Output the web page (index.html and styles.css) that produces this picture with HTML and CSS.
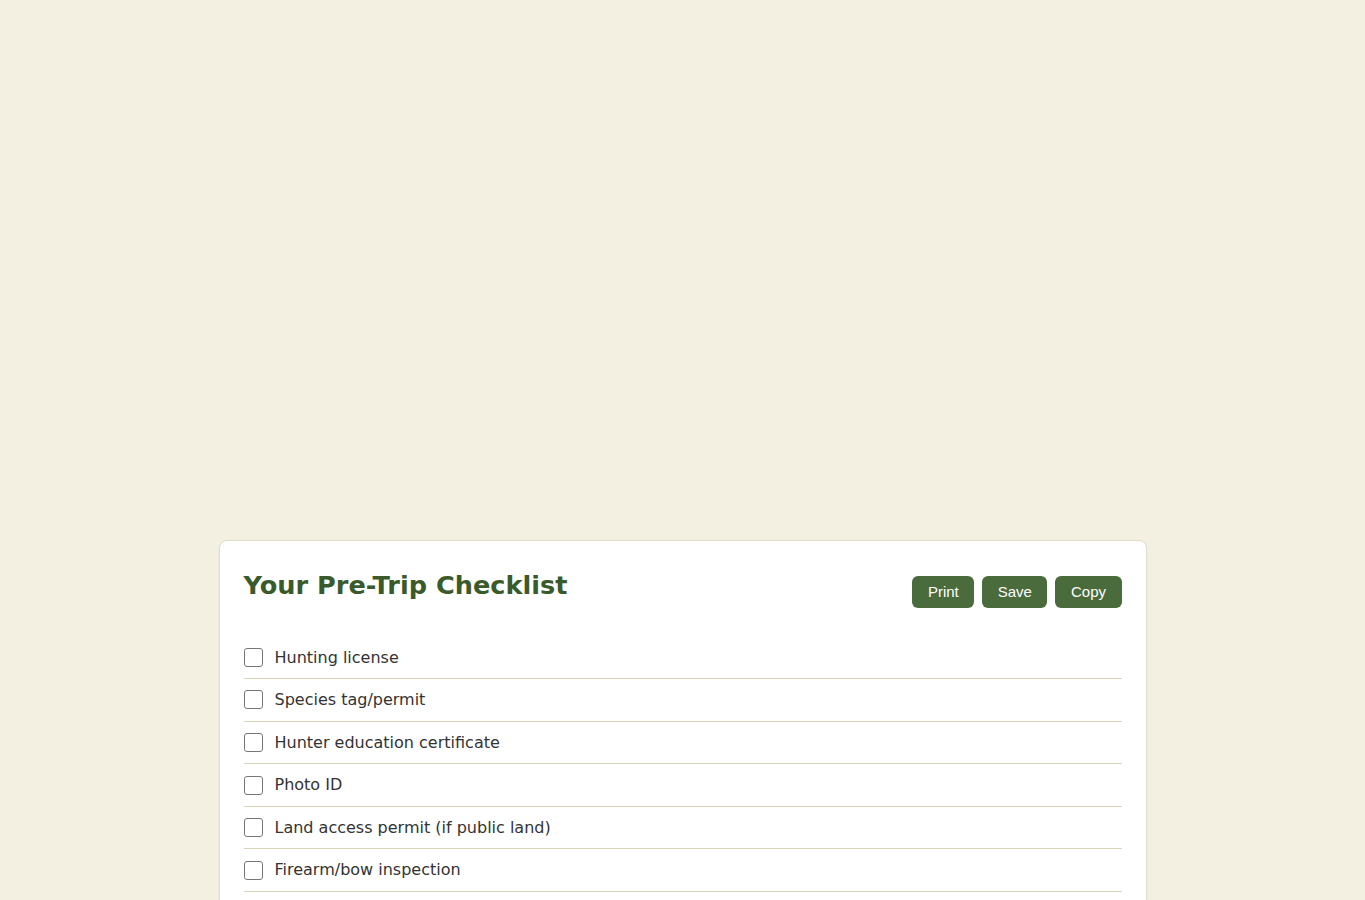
FILE: index.html
```html
<!DOCTYPE html>
<html>

<head>
  <title>Pre-Trip Checklist</title>
  <link rel="stylesheet" href="styles.css">
</head>

<body>
  <div class="checklist-card">
    <div class="card-head">
      <h2 class="card-title">Your Pre-Trip Checklist</h2>
      <div class="card-actions">
        <button type="button" class="btn">Print</button>
        <button type="button" class="btn">Save</button>
        <button type="button" class="btn">Copy</button>
      </div>
    </div>
    <ul class="check-list">
      <li class="check-row"><input type="checkbox" id="c1" /><label for="c1">Hunting license</label></li>
      <li class="check-row"><input type="checkbox" id="c2" /><label for="c2">Species tag/permit</label></li>
      <li class="check-row"><input type="checkbox" id="c3" /><label for="c3">Hunter education certificate</label></li>
      <li class="check-row"><input type="checkbox" id="c4" /><label for="c4">Photo ID</label></li>
      <li class="check-row"><input type="checkbox" id="c5" /><label for="c5">Land access permit (if public land)</label></li>
      <li class="check-row"><input type="checkbox" id="c6" /><label for="c6">Firearm/bow inspection</label></li>
      <li class="check-row"><input type="checkbox" id="c7" /><label for="c7">Blaze orange clothing</label></li>
      <li class="check-row"><input type="checkbox" id="c8" /><label for="c8">First aid kit</label></li>
    </ul>
  </div>
</body>

</html>
```

FILE: styles.css
```css
body {
    margin: 0;
    background-color: #f3f0e2;
    font-family: "DejaVu Sans", sans-serif;
    color: #333;
}
.checklist-card {
    width: 878px;
    margin: 540px auto 0 auto;
    padding: 28px 24px 24px 24px;
    background-color: #fff;
    border: 1px solid #e2dec8;
    border-radius: 8px;
    box-shadow: 0 1px 3px rgba(0, 0, 0, 0.04);
}
.card-head {
    display: flex;
    justify-content: space-between;
    align-items: flex-start;
    margin-bottom: 29px;
}
.card-title {
    margin: 0;
    padding-top: 1px;
    font-size: 25.6px;
    font-weight: bold;
    line-height: 30px;
    color: #3b5a2c;
}
.card-actions {
    display: flex;
    gap: 8px;
    margin-top: 7px;
}
.btn {
    font-family: "Liberation Sans", Arial, sans-serif;
    font-size: 15px;
    line-height: 17px;
    color: #fff;
    background-color: #4a6b3c;
    border: none;
    border-radius: 6px;
    padding: 7px 15.5px 7.5px 15.5px;
    cursor: pointer;
}
.btn:hover {
    background-color: #3f5d33;
}
.check-list {
    list-style: none;
    margin: 0;
    padding: 0;
}
.check-row {
    display: flex;
    align-items: center;
    padding: 8px 0;
    font-size: 16px;
    line-height: 1.6;
    border-bottom: 1px solid #d9d5b8;
}
.check-row input {
    -webkit-appearance: none;
    appearance: none;
    width: 19px;
    height: 19px;
    margin: 0 12px 0 0;
    border: 1px solid #767676;
    border-radius: 3px;
    background-color: #fff;
    flex-shrink: 0;
}
.check-row input:checked {
    background-color: #4a6b3c;
    border-color: #4a6b3c;
}
.check-row label {
    cursor: pointer;
}
```
